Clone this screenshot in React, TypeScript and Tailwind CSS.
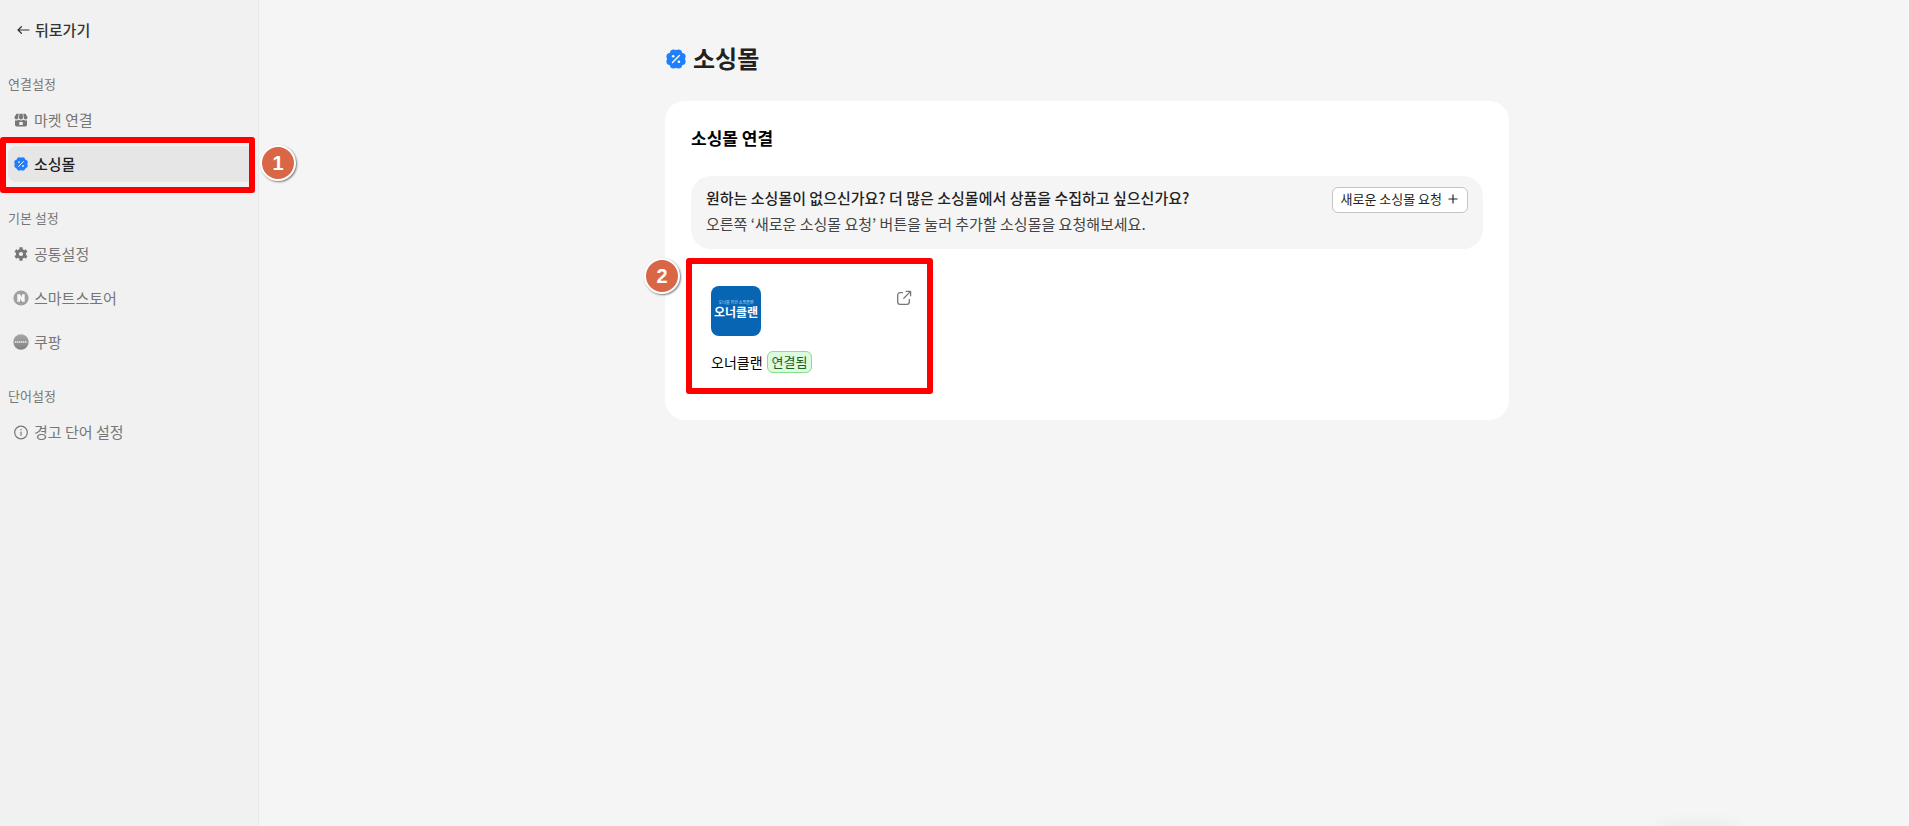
import type { ReactNode } from "react";
import { LuPlus } from "react-icons/lu";

type NavItem = { label: string; icon: ReactNode; active?: boolean };
type NavGroup = { title: string; items: NavItem[] };

function BackIcon() {
  return (
    <svg viewBox="0 0 16 16" className="size-4" fill="none" stroke="currentColor" strokeWidth="1.2" strokeLinecap="round" strokeLinejoin="round" aria-hidden="true">
      <path d="M13 8H2M5.400 4.700 2 8 5.400 11.300" />
    </svg>
  );
}

function PercentBadgeIcon({ className }: { className: string }) {
  return (
    <svg viewBox="0 0 20 20" className={className} aria-hidden="true">
      <g fill="#1e80ff">
        <circle cx="10" cy="10" r="8.800" />
        <circle cx="12.500" cy="3.900" r="3.500" />
        <circle cx="16.100" cy="7.500" r="3.500" />
        <circle cx="16.100" cy="12.500" r="3.500" />
        <circle cx="12.500" cy="16.100" r="3.500" />
        <circle cx="7.500" cy="16.100" r="3.500" />
        <circle cx="3.900" cy="12.500" r="3.500" />
        <circle cx="3.900" cy="7.500" r="3.500" />
        <circle cx="7.500" cy="3.900" r="3.500" />
      </g>
      <path d="M6.500 13.500 13.400 6.600" stroke="#fff" strokeWidth="1.400" strokeLinecap="round" />
      <circle cx="7.200" cy="7.300" r="1.300" fill="#fff" />
      <circle cx="12.900" cy="12.800" r="1.300" fill="#fff" />
    </svg>
  );
}

function StoreIcon() {
  return (
    <svg viewBox="0 0 16 16" className="size-4" fill="currentColor" aria-hidden="true">
      <path d="M3.500 1.800h2.200L5.300 5.600a1.600 1.600 0 0 1-3.800 0V4.900z" />
      <path d="M6.500 1.800h3l.5 3.800a2 2 0 0 1-4 0z" />
      <path d="M10.300 1.800h2.200l2 3.100v.7a1.600 1.600 0 0 1-3.800 0z" />
      <path fillRule="evenodd" d="M2 8.200c1.300.5 2.600.3 3.600-.5 1.400 1 3.400 1 4.800 0 1 .8 2.300 1 3.600.5v4.600a1.600 1.600 0 0 1-1.600 1.600H3.600A1.600 1.600 0 0 1 2 12.800zM6.300 10v2.900h3.400V10z" />
    </svg>
  );
}

function GearIcon() {
  return (
    <svg viewBox="0 0 16 16" className="size-4" aria-hidden="true">
      <path d="M8 1.200v13.600M2.300 4.600l11.400 6.800M2.300 11.400l11.400-6.800" stroke="currentColor" strokeWidth="3.200" />
      <circle cx="8" cy="8" r="3.800" fill="none" stroke="currentColor" strokeWidth="2.600" />
      <circle cx="8" cy="8" r="2.100" fill="#f1f1f1" />
    </svg>
  );
}

function NaverIcon() {
  return (
    <svg viewBox="0 0 16 16" className="size-4" aria-hidden="true">
      <circle cx="8" cy="8" r="7.600" fill="#a0a0a0" />
      <path d="M4.300 4.200h2.600l2.100 3.200V4.200h2.700v7.600H9.100L7 8.600v3.200H4.300z" fill="#f8f8f8" />
    </svg>
  );
}

function CoupangIcon() {
  return (
    <svg viewBox="0 0 16 16" className="size-4" aria-hidden="true">
      <defs>
        <linearGradient id="coupang" x1="0" y1="0" x2="0" y2="1">
          <stop offset="0" stopColor="#a6a6a6" />
          <stop offset="1" stopColor="#828282" />
        </linearGradient>
      </defs>
      <circle cx="8" cy="8" r="7.700" fill="url(#coupang)" />
      <path d="M1.800 8h12.400" stroke="#d8d8d8" strokeWidth="2" strokeDasharray="1.400 0.600" />
    </svg>
  );
}

function InfoIcon() {
  return (
    <svg viewBox="0 0 16 16" className="size-4" fill="none" stroke="currentColor" aria-hidden="true">
      <circle cx="8" cy="8.500" r="6.300" strokeWidth="1.200" />
      <path d="M8 8v3.200" strokeWidth="1.200" strokeLinecap="round" />
      <circle cx="8" cy="5.800" r="0.750" fill="currentColor" stroke="none" />
    </svg>
  );
}

function OpenIcon() {
  return (
    <svg viewBox="0 0 16 16" className="size-4" fill="none" stroke="currentColor" strokeWidth="1.300" strokeLinecap="round" strokeLinejoin="round" aria-hidden="true">
      <path d="M6.500 2.700H4.100a2.400 2.400 0 0 0-2.400 2.400v6.800a2.400 2.400 0 0 0 2.400 2.400h6.800a2.400 2.400 0 0 0 2.400-2.400V9.500" />
      <path d="M7.800 8.200 14.600 1.400M10.200 1.400h4.400v4.400" />
    </svg>
  );
}

const groups: NavGroup[] = [
  {
    title: "연결설정",
    items: [
      { label: "마켓 연결", icon: <StoreIcon /> },
      { label: "소싱몰", icon: <PercentBadgeIcon className="size-[14px]" />, active: true },
    ],
  },
  {
    title: "기본 설정",
    items: [
      { label: "공통설정", icon: <GearIcon /> },
      { label: "스마트스토어", icon: <NaverIcon /> },
      { label: "쿠팡", icon: <CoupangIcon /> },
    ],
  },
  {
    title: "단어설정",
    items: [{ label: "경고 단어 설정", icon: <InfoIcon /> }],
  },
];

function Marker({ n, className }: { n: number; className: string }) {
  return (
    <span
      className={`absolute z-10 flex size-9 items-center justify-center rounded-full border-2 border-white bg-[#d96746] font-['Liberation_Sans',sans-serif] text-xl font-bold text-white shadow-[1px_1px_2px_rgba(0,0,0,0.5)] ${className}`}
    >
      {n}
    </span>
  );
}

function Sidebar() {
  return (
    <aside className="w-[259px] shrink-0 border-r border-[#e8e8e8] bg-[#f1f1f1] px-2 pt-5">
      <a href="#back" className="flex h-5 items-center gap-[3px] pl-2 text-[15px] font-medium text-[#333]">
        <BackIcon />
        뒤로가기
      </a>
      <nav className="mt-[34px] flex flex-col gap-[26px]">
        {groups.map((group) => (
          <section key={group.title}>
            <h2 className="text-[13px] leading-5 text-[#777]">{group.title}</h2>
            <ul className="mt-2 flex flex-col gap-2">
              {group.items.map((item) => (
                <li key={item.label} className="relative">
                  <a
                    href="#menu"
                    aria-current={item.active ? "page" : undefined}
                    className={`-mr-1 flex h-9 items-center gap-[5px] rounded-lg pl-[5px] text-[15px] ${
                      item.active ? "bg-[#e6e6e6] font-medium text-[#222]" : "text-[#777]"
                    }`}
                  >
                    <span className="flex w-4 justify-center">{item.icon}</span>
                    {item.label}
                  </a>
                  {item.active && (
                    <>
                      <span className="pointer-events-none absolute -top-[9px] -left-2 h-14 w-[255px] rounded-[3px] border-6 border-[#ff0000]" />
                      <Marker n={1} className="-top-px left-[252px]" />
                    </>
                  )}
                </li>
              ))}
            </ul>
          </section>
        ))}
      </nav>
    </aside>
  );
}

function MallCard() {
  return (
    <article className="relative mt-4 w-[245px] rounded-2xl border border-[#f7f7f7] bg-white py-5 pr-5 pl-[19px]">
      <div className="flex items-start justify-between">
        <div className="flex size-[50px] flex-col items-center rounded-lg bg-[#0765b4] pt-3.5 text-white">
          <span className="text-[4px] leading-[4px] whitespace-nowrap opacity-70">오너를 위한 쇼핑클랜</span>
          <span className="text-xs leading-4 font-bold">오너클랜</span>
        </div>
        <button type="button" aria-label="열기" className="mt-1 mr-[3px] text-[#777]">
          <OpenIcon />
        </button>
      </div>
      <div className="mt-[15px] flex items-center gap-1">
        <span className="text-sm leading-[22px] text-black">오너클랜</span>
        <span className="rounded-md border border-[#86e08c] bg-[#dcfadd] px-1 text-[13px] leading-5 text-[#1f5f26]">연결됨</span>
      </div>
      <span className="pointer-events-none absolute -top-2 -left-1.5 h-[136px] w-[247px] rounded-[3px] border-6 border-[#ff0000]" />
      <Marker n={2} className="-top-2 -left-12" />
    </article>
  );
}

export default function App() {
  return (
    <div className="flex min-h-screen bg-[#f5f5f5] font-['Noto_Sans_CJK_KR',sans-serif] text-[#222]">
      <Sidebar />
      <main className="relative flex-1 overflow-hidden pt-10 pl-1.5">
        <div className="mx-auto max-w-[844px]">
          <h1 className="flex h-9 items-center gap-[7px] text-2xl font-bold text-[#222]">
            <PercentBadgeIcon className="mt-0.5 ml-px size-5" />
            소싱몰
          </h1>
          <section className="mt-[25px] rounded-[20px] bg-white px-[26px] pt-[25px] pb-[26px]">
            <h2 className="text-[17px] leading-6 font-bold text-black">소싱몰 연결</h2>
            <div className="mt-[26px] flex items-start justify-between rounded-[20px] bg-[#f5f5f5] px-[15px] pt-[9px] pb-3">
              <div className="text-[15px] leading-[26px]">
                <p className="font-medium text-[#222]">원하는 소싱몰이 없으신가요? 더 많은 소싱몰에서 상품을 수집하고 싶으신가요?</p>
                <p className="text-[#444]">오른쪽 ‘새로운 소싱몰 요청’ 버튼을 눌러 추가할 소싱몰을 요청해보세요.</p>
              </div>
              <button
                type="button"
                className="mt-0.5 flex h-[26px] shrink-0 items-center gap-1 rounded-md border border-[#c4c4c4] bg-white px-[7px] pb-0.5 text-[13px] text-[#222]"
              >
                새로운 소싱몰 요청
                <LuPlus className="size-[14px]" strokeWidth={2} />
              </button>
            </div>
            <MallCard />
          </section>
        </div>
        <div className="pointer-events-none absolute right-[170px] -bottom-4 h-3 w-20 rounded-full shadow-[0_0_20px_rgba(0,0,0,0.1)]" />
      </main>
    </div>
  );
}
